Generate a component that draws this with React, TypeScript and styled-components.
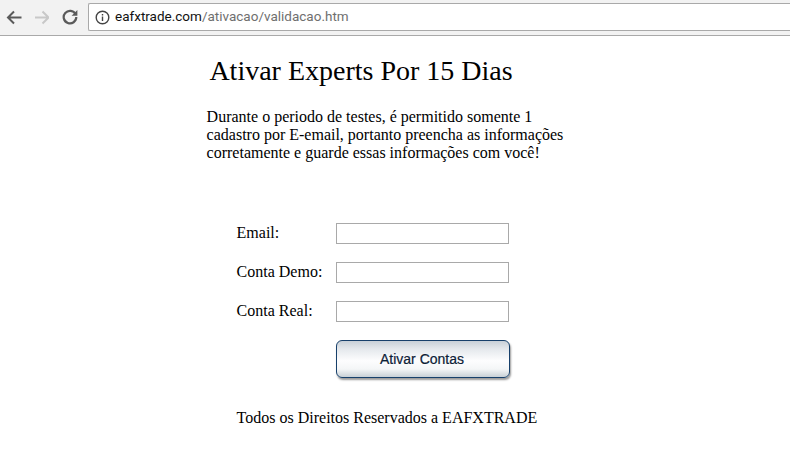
import React from "react";
import styled, { createGlobalStyle } from "styled-components";

const Global = createGlobalStyle`
  html, body { margin: 0; padding: 0; background: #fff; overflow: hidden; }
  body { font-family: "Liberation Serif", "Times New Roman", serif; color: #000; }
`;

const Page = styled.div`
  width: 790px;
  height: 451px;
  display: flex;
  flex-direction: column;
  overflow: hidden;
`;

const Toolbar = styled.header`
  height: 35px;
  flex: none;
  display: flex;
  align-items: flex-start;
  background: #f2f2f2;
  border-bottom: 1px solid #a9a9a9;
  box-sizing: content-box;
`;

const NavButton = styled.div`
  width: 22px;
  height: 22px;
  margin-top: 6px;
  flex: none;
  display: flex;
  align-items: center;
  justify-content: center;
  margin-left: ${(p: { $gap: number }) => p.$gap}px;
`;

const Omnibox = styled.div`
  margin: 3px 0 0 7px;
  flex: 1;
  height: 26px;
  background: #fff;
  border: 1px solid #a9a9a9;
  border-right: none;
  border-radius: 2px 0 0 2px;
  display: flex;
  align-items: center;
  padding-left: 6px;
  font: 13.5px/1 "Roboto", "Liberation Sans", sans-serif;
`;

const InfoIcon = styled.svg`
  width: 15px;
  height: 15px;
  flex: none;
  margin-right: 5px;
`;

const Host = styled.span`
  color: #111;
`;

const UrlPath = styled.span`
  color: #6f6f6f;
`;

const Content = styled.main`
  padding: 17px 0 0 206.6px;
`;

const Title = styled.h1`
  margin: 0 0 0 2.8px;
  font-size: 28px;
  line-height: 36px;
  font-weight: 400;
`;

const Intro = styled.p`
  margin: 19px 0 0;
  width: 365px;
  font-size: 16px;
  line-height: 18px;
`;

const Form = styled.form`
  margin: 61px 0 0 30px;
  display: flex;
  flex-direction: column;
  gap: 18px;
`;

const Row = styled.label`
  display: flex;
  align-items: flex-start;
  height: 21px;
  font-size: 16px;
  line-height: 18px;
`;

const LabelText = styled.span`
  width: 99.4px;
  flex: none;
  padding-top: 1px;
`;

const Field = styled.input`
  width: 173px;
  height: 21px;
  box-sizing: border-box;
  border: 1px solid #a9a9a9;
  background: #fff;
  padding: 0 2px;
  outline: none;
`;

const Submit = styled.button`
  margin: 0 0 0 99.4px;
  width: 174px;
  height: 38px;
  box-sizing: border-box;
  border: 1px solid #17406b;
  border-radius: 6px;
  background: linear-gradient(#c8d0d8 0%, #e4e8ec 22%, #fdfdfe 55%, #f4f6f7 78%, #c8d0d6 100%);
  box-shadow: 1px 2px 2px rgba(0, 0, 0, 0.4);
  color: #0c2036;
  -webkit-text-stroke: 0.2px #0c2036;
  font: 14px/1 "Liberation Sans", Arial, sans-serif;
  padding: 0 2px 0 0;
`;

const Footer = styled.footer`
  margin: 31px 0 0 30px;
  font-size: 16px;
  line-height: 18px;
`;

export default function App() {
  return (
    <Page>
      <Global />
      <Toolbar>
        <NavButton $gap={3}>
          <svg width="16" height="16" viewBox="0 0 16 16" fill="none" stroke="#5a5a5a" strokeWidth="2">
            <path d="M15.5 8.5H2M8 2.5l-6 6 6 6" />
          </svg>
        </NavButton>
        <NavButton $gap={5}>
          <svg width="16" height="16" viewBox="0 0 16 16" fill="none" stroke="#c8c8c8" strokeWidth="2">
            <path d="M2 8.5h13.5M9.500 2.500l6 6-6 6" />
          </svg>
        </NavButton>
        <NavButton $gap={7}>
          <svg width="16" height="16" viewBox="0 0 16 16" fill="none" stroke="#5a5a5a" strokeWidth="2.2">
            <path d="M13.6 5.200A6.300 6.300 0 1 0 14.300 8" />
            <path d="M15.400 1v5.800H9.600z" fill="#5a5a5a" stroke="none" />
          </svg>
        </NavButton>
        <Omnibox>
          <InfoIcon viewBox="0 0 15 15" fill="none" stroke="#444" strokeWidth="1.4">
            <circle cx="7.500" cy="7.500" r="6.300" />
            <path d="M7.500 6.600v4.400M7.500 4v1.600" />
          </InfoIcon>
          <Host>eafxtrade.com</Host>
          <UrlPath>/ativacao/validacao.htm</UrlPath>
        </Omnibox>
      </Toolbar>
      <Content>
        <Title>Ativar Experts Por 15 Dias</Title>
        <Intro>
          Durante o periodo de testes, é permitido somente 1 cadastro por E-email, portanto preencha as informações
          corretamente e guarde essas informações com você!
        </Intro>
        <Form onSubmit={(e) => e.preventDefault()}>
          <Row>
            <LabelText>Email:</LabelText>
            <Field type="text" />
          </Row>
          <Row>
            <LabelText>Conta Demo:</LabelText>
            <Field type="text" />
          </Row>
          <Row>
            <LabelText>Conta Real:</LabelText>
            <Field type="text" />
          </Row>
          <Submit type="submit">Ativar Contas</Submit>
        </Form>
        <Footer>Todos os Direitos Reservados a EAFXTRADE</Footer>
      </Content>
    </Page>
  );
}
